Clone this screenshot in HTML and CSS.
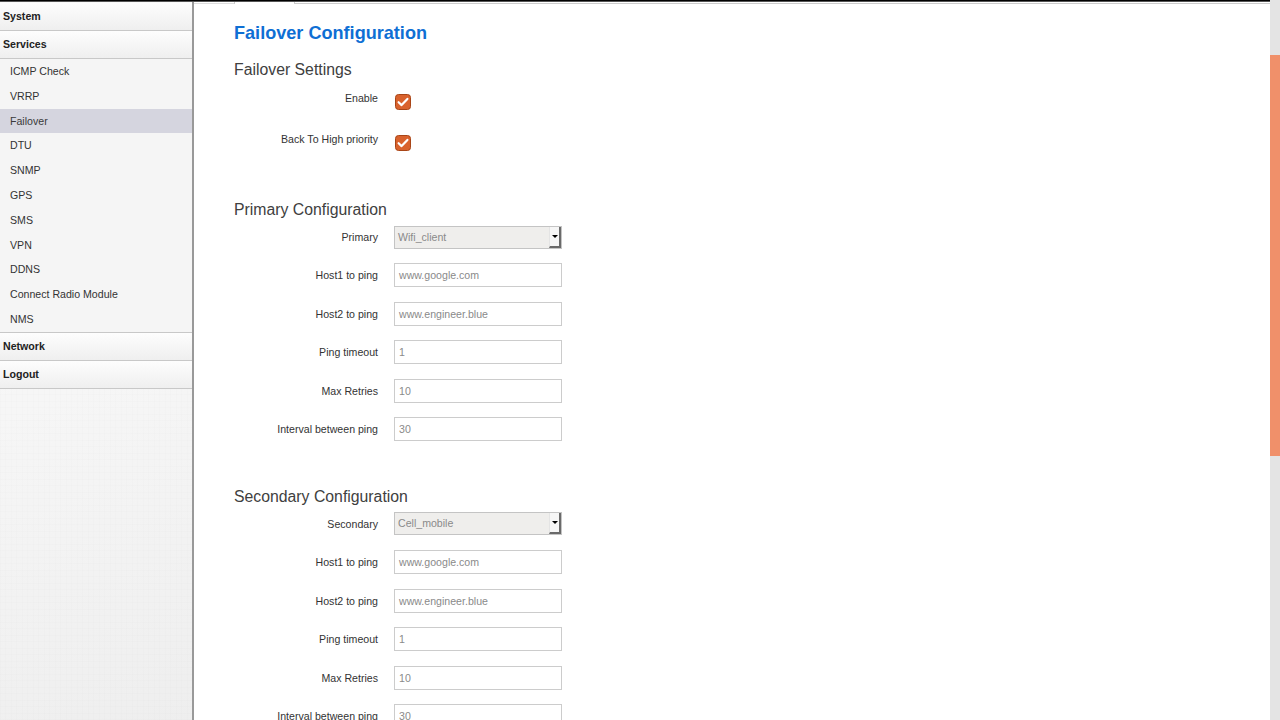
FILE: index.html
```html
<!DOCTYPE html>
<html>
<head>
<meta charset="utf-8">
<title>Failover Configuration</title>
<link rel="stylesheet" href="styles.css">
</head>
<body>
<div class="app">
  <div class="topline"></div>
  <div class="layout">
    <nav class="sidebar">
      <div class="menu-head">System</div>
      <div class="menu-head">Services</div>
      <ul class="submenu">
        <li>ICMP Check</li>
        <li>VRRP</li>
        <li class="active">Failover</li>
        <li>DTU</li>
        <li>SNMP</li>
        <li>GPS</li>
        <li>SMS</li>
        <li>VPN</li>
        <li>DDNS</li>
        <li>Connect Radio Module</li>
        <li>NMS</li>
      </ul>
      <div class="menu-head">Network</div>
      <div class="menu-head">Logout</div>
      <div class="sidebar-fill"></div>
    </nav>
    <main class="content">
      <div class="tabs"><span class="tab-left"></span><span class="tab"></span><span class="tab-rest"></span></div>
      <h1 class="page-title">Failover Configuration</h1>

      <h2 class="section-title">Failover Settings</h2>
      <div class="check-grid">
        <label class="field-label">Enable</label>
        <span class="checkbox"><svg width="16" height="16" viewBox="0 0 16 16"><rect x="0.5" y="0.5" width="15" height="15" rx="3" fill="#d9622d" stroke="#a84517"/><path d="M3.6 8.2 L6.6 11.1 L12.4 4.9" fill="none" stroke="#fff" stroke-width="2.2" stroke-linecap="round" stroke-linejoin="round"/></svg></span>
        <label class="field-label">Back To High priority</label>
        <span class="checkbox"><svg width="16" height="16" viewBox="0 0 16 16"><rect x="0.5" y="0.5" width="15" height="15" rx="3" fill="#d9622d" stroke="#a84517"/><path d="M3.6 8.2 L6.6 11.1 L12.4 4.9" fill="none" stroke="#fff" stroke-width="2.2" stroke-linecap="round" stroke-linejoin="round"/></svg></span>
      </div>

      <h2 class="section-title primary-title">Primary Configuration</h2>
      <div class="form-grid">
        <label class="field-label">Primary</label>
        <div class="select"><span class="select-value">Wifi_client</span><span class="select-btn"><span class="caret"></span></span></div>
        <label class="field-label">Host1 to ping</label>
        <div class="input">www.google.com</div>
        <label class="field-label">Host2 to ping</label>
        <div class="input">www.engineer.blue</div>
        <label class="field-label">Ping timeout</label>
        <div class="input">1</div>
        <label class="field-label">Max Retries</label>
        <div class="input">10</div>
        <label class="field-label">Interval between ping</label>
        <div class="input">30</div>
      </div>

      <h2 class="section-title secondary-title">Secondary Configuration</h2>
      <div class="form-grid secondary-grid">
        <label class="field-label">Secondary</label>
        <div class="select"><span class="select-value">Cell_mobile</span><span class="select-btn"><span class="caret"></span></span></div>
        <label class="field-label">Host1 to ping</label>
        <div class="input">www.google.com</div>
        <label class="field-label">Host2 to ping</label>
        <div class="input">www.engineer.blue</div>
        <label class="field-label">Ping timeout</label>
        <div class="input">1</div>
        <label class="field-label">Max Retries</label>
        <div class="input">10</div>
        <label class="field-label">Interval between ping</label>
        <div class="input">30</div>
      </div>
    </main>
  </div>
</div>
<div class="scrollbar"><div class="scroll-thumb"></div></div>
</body>
</html>
```
FILE: styles.css
```css
* { box-sizing: border-box; }
html, body { margin: 0; padding: 0; }
body {
  width: 1280px;
  height: 720px;
  overflow: hidden;
  display: flex;
  font-family: "Liberation Sans", Arial, sans-serif;
  font-size: 10.6px;
  color: #333;
  background: #fff;
}
.app {
  flex: 1;
  display: flex;
  flex-direction: column;
  min-width: 0;
}
.topline {
  height: 2px;
  background: linear-gradient(#000 50%, #555 50%);
  flex: none;
}
.layout {
  flex: 1;
  display: flex;
  min-height: 0;
}
.sidebar {
  width: 194px;
  flex: none;
  padding-top: 1px;
  border-right: 2px solid #999;
  display: flex;
  flex-direction: column;
  background: #fafafa;
}
.menu-head {
  height: 28px;
  line-height: 27px;
  border-bottom: 1px solid #c8c8c8;
  padding-left: 3px;
  font-weight: bold;
  color: #222;
  background: linear-gradient(#fdfdfd, #efefef);
}
.submenu {
  list-style: none;
  margin: 0;
  padding: 0;
  background: #f5f5f5;
  border-bottom: 1px solid #c8c8c8;
}
.submenu li {
  height: 24.8px;
  line-height: 24.8px;
  padding-left: 10px;
  color: #333;
}
.submenu li.active {
  background: #d5d5df;
  color: #3a3a3a;
}
.sidebar-fill {
  flex: 1;
  background-color: #f1f1f1;
  background-image:
    repeating-linear-gradient(90deg, rgba(0,0,0,0.006) 0 1px, transparent 1px 5px, rgba(0,0,0,0.008) 5px 6px, transparent 6px 11px),
    repeating-linear-gradient(0deg, rgba(0,0,0,0.006) 0 1px, transparent 1px 6px, rgba(0,0,0,0.008) 6px 7px, transparent 7px 13px),
    linear-gradient(160deg, rgba(255,255,255,0.4), rgba(0,0,0,0.01));
}
.content {
  flex: 1;
  padding-left: 40px;
  background: #fff;
}
.tabs {
  display: flex;
  height: 2px;
  margin-left: -40px;
}
.tab-left { width: 40px; border-bottom: 1px solid #ddd; }
.tab { width: 61px; border-left: 1px solid #ccc; border-right: 1px solid #ccc; }
.tab-rest { flex: 1; border-bottom: 1px solid #ccc; }
.page-title {
  margin: 17px 0 0;
  font-size: 18.1px;
  line-height: 24px;
  font-weight: bold;
  color: #0f6fd4;
}
.section-title {
  margin: 15px 0 0;
  font-size: 15.8px;
  line-height: 20px;
  font-weight: normal;
  color: #404040;
}
.check-grid {
  display: grid;
  grid-template-columns: 144px 168px;
  grid-auto-rows: 41px;
  column-gap: 16px;
  margin-top: 11px;
}
.field-label {
  text-align: right;
  color: #333;
  line-height: 14px;
}
.checkbox {
  display: block;
  width: 16px;
  height: 16px;
  margin: 3px 0 0 1px;
}
.checkbox svg { display: block; }
.primary-title { margin-top: 27px; }
.secondary-title { margin-top: 46px; }
.form-grid {
  display: grid;
  grid-template-columns: 144px 168px;
  grid-auto-rows: 24px;
  column-gap: 16px;
  row-gap: 14.4px;
  align-items: center;
  margin-top: 5px;
}
.secondary-grid { margin-top: 5px; }
.input {
  height: 24px;
  border: 1px solid #ccc;
  padding-left: 4px;
  line-height: 22px;
  color: #8a8a8a;
  background: #fff;
}
.select {
  height: 23px;
  display: flex;
  border: 1px solid #c4c4c4;
  background: #efeeec;
  color: #8a8a8a;
}
.select-value {
  flex: 1;
  padding-left: 3px;
  line-height: 21px;
}
.select-btn {
  width: 12px;
  display: flex;
  align-items: center;
  justify-content: center;
  background: #f6f6f6;
  border-left: 1px solid #e4e4e4;
  border-right: 2px solid #6a6a6a;
  border-bottom: 2px solid #6a6a6a;
}
.caret {
  width: 0;
  height: 0;
  border-left: 3px solid transparent;
  border-right: 3px solid transparent;
  border-top: 3px solid #000;
}
.scrollbar {
  width: 10px;
  flex: none;
  background: #e4e4e4;
  padding-top: 55px;
}
.scroll-thumb {
  height: 401px;
  background: #f0906a;
}
```
